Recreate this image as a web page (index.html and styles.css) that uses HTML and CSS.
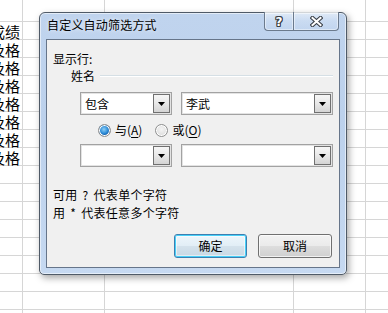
FILE: index.html
```html
<!DOCTYPE html>
<html lang="zh-CN">
<head>
<meta charset="utf-8">
<title>自定义自动筛选方式</title>
<link rel="stylesheet" href="styles.css">
</head>
<body>
<div class="sheet">
  <div class="col-a">
    <div class="cell"><span>成绩</span></div>
    <div class="cell"><span>及格</span></div>
    <div class="cell"><span>及格</span></div>
    <div class="cell"><span>及格</span></div>
    <div class="cell"><span>及格</span></div>
    <div class="cell"><span>及格</span></div>
    <div class="cell"><span>及格</span></div>
    <div class="cell"><span>及格</span></div>
  </div>

  <div class="dialog">
    <div class="titlebar">
      <span class="title">自定义自动筛选方式</span>
      <div class="caption-btns">
        <div class="cap help"><span class="help-glyph">?</span></div>
        <div class="cap close">
          <svg width="13" height="11" viewBox="0 0 13 11">
            <path d="M2.5 2 L10.5 9 M10.5 2 L2.5 9" stroke="#3a3f47" stroke-width="4.2" stroke-linecap="square" fill="none"/>
            <path d="M2.5 2 L10.5 9 M10.5 2 L2.5 9" stroke="#ffffff" stroke-width="2" stroke-linecap="square" fill="none"/>
          </svg>
        </div>
      </div>
    </div>
    <div class="client">
      <div class="show-label">显示行:</div>
      <div class="field-row">
        <span class="field-name">姓名</span>
        <span class="groove"></span>
      </div>
      <div class="combo-row first">
        <div class="combo narrow">
          <span class="val">包含</span>
          <span class="drop"><svg width="7" height="4" viewBox="0 0 7 4"><polygon points="0,0 7,0 3.5,4" fill="#000"/></svg></span>
        </div>
        <div class="combo wide">
          <span class="val">李武</span>
          <span class="drop"><svg width="7" height="4" viewBox="0 0 7 4"><polygon points="0,0 7,0 3.5,4" fill="#000"/></svg></span>
        </div>
      </div>
      <div class="radio-row">
        <label class="radio on"><span class="dot"></span><span>与(<u>A</u>)</span></label>
        <label class="radio"><span class="dot"></span><span>或(<u>O</u>)</span></label>
      </div>
      <div class="combo-row second">
        <div class="combo narrow">
          <span class="val"></span>
          <span class="drop"><svg width="7" height="4" viewBox="0 0 7 4"><polygon points="0,0 7,0 3.5,4" fill="#000"/></svg></span>
        </div>
        <div class="combo wide">
          <span class="val"></span>
          <span class="drop"><svg width="7" height="4" viewBox="0 0 7 4"><polygon points="0,0 7,0 3.5,4" fill="#000"/></svg></span>
        </div>
      </div>
      <div class="hint first-hint">可用 ? 代表单个字符</div>
      <div class="hint">用 * 代表任意多个字符</div>
      <div class="btn-row">
        <button class="btn default">确定</button>
        <button class="btn">取消</button>
      </div>
    </div>
  </div>
</div>
</body>
</html>
```

FILE: styles.css
```css
* { box-sizing: border-box; }
html, body { margin: 0; padding: 0; }
body {
  width: 388px;
  height: 313px;
  overflow: hidden;
  background: #fff;
  font-family: "Noto Sans CJK SC", "Noto Sans", sans-serif;
}

.sheet {
  position: relative;
  width: 388px;
  height: 313px;
  overflow: hidden;
  background-color: #fff;
  background-image:
    linear-gradient(#d6d6d6, #d6d6d6),
    linear-gradient(#d6d6d6, #d6d6d6),
    linear-gradient(#d6d6d6, #d6d6d6),
    linear-gradient(#d6d6d6, #d6d6d6),
    repeating-linear-gradient(to bottom, #d6d6d6 0 1px, transparent 1px 18px);
  background-size: 1px 100%, 1px 100%, 1px 100%, 1px 100%, 100% 292px;
  background-position: 22px 0, 104px 0, 293px 0, 365px 0, 0 21px;
  background-repeat: no-repeat;
}

.col-a {
  width: 22px;
  padding-top: 22px;
  display: flex;
  flex-direction: column;
}
.cell {
  height: 18px;
  display: flex;
  justify-content: flex-end;
  align-items: center;
  overflow: hidden;
  padding-right: 2px;
  font-size: 15px;
  line-height: 17px;
  white-space: nowrap;
  color: #000;
}
.cell span { display: block; height: 17px; }

/* dialog window */
.dialog {
  position: absolute;
  left: 39px;
  top: 12px;
  width: 308px;
  height: 263px;
  border: 1px solid #4f5a67;
  border-radius: 6px 6px 5px 5px;
  background: linear-gradient(to bottom, #c0d4ee 0, #bcd1ec 40%, #c6d9f1 100%);
  box-shadow: inset 0 0 0 1px rgba(255,255,255,0.55), 2px 3px 7px rgba(0,0,0,0.35);
  padding: 0 6px 6px 6px;
  display: flex;
  flex-direction: column;
}
.titlebar {
  height: 26px;
  display: flex;
  align-items: flex-start;
}
.title {
  margin-left: 1px;
  margin-top: 4px;
  font-size: 12px;
  line-height: 16px;
  color: #000;
  text-shadow: 0 0 4px rgba(255,255,255,0.9);
  letter-spacing: 0.2px;
}
.caption-btns {
  margin-left: auto;
  margin-top: -1px;
  margin-right: 1px;
  display: flex;
}
.cap {
  height: 19px;
  border: 1px solid #6b7a8d;
  border-top: none;
  background: linear-gradient(to bottom, rgba(255,255,255,0.55), rgba(225,236,250,0.3) 50%, rgba(200,218,242,0.2));
  display: flex;
  align-items: center;
  justify-content: center;
  box-shadow: inset 0 0 0 1px rgba(255,255,255,0.45);
}
.help {
  width: 29px;
  border-radius: 0 0 0 4px;
  border-right: none;
}
.close {
  width: 46px;
  border-radius: 0 0 4px 0;
}
.help-glyph {
  font-family: "DejaVu Sans", sans-serif;
  font-weight: bold;
  font-size: 12px;
  line-height: 12px;
  color: #fff;
  margin-top: 1px;
  text-shadow:
    1px 0 0 #3a3f47, -1px 0 0 #3a3f47, 0 1px 0 #3a3f47, 0 -1px 0 #3a3f47,
    1px 1px 0 #3a3f47, -1px -1px 0 #3a3f47, 1px -1px 0 #3a3f47, -1px 1px 0 #3a3f47;
}

.client {
  flex: 1;
  background: #f0f0f0;
  border: 1px solid #66758a;
  display: flex;
  flex-direction: column;
  font-size: 12px;
  line-height: 16px;
  color: #000;
}
.show-label {
  margin: 11px 0 0 6px;
}
.field-row {
  margin: 1px 6px 0 24px;
  display: flex;
  align-items: center;
}
.groove {
  flex: 1;
  height: 2px;
  margin-left: 5px;
  border-top: 1px solid #d5dfe5;
  border-bottom: 1px solid #ffffff;
}

.combo-row {
  display: flex;
  gap: 9px;
  margin-left: 33px;
}
.combo-row.first { margin-top: 8px; }
.combo-row.second { margin-top: 6px; }
.combo {
  height: 23px;
  border: 1px solid #a2a2a2;
  box-shadow: inset 0 0 0 1px #e3e3e3;
  background: #fff;
  padding: 1px;
  display: flex;
  align-items: stretch;
}
.combo.narrow { width: 92px; }
.combo.wide { width: 152px; }
.val {
  flex: 1;
  padding-left: 3px;
  display: flex;
  align-items: center;
  font-size: 12px;
}
.drop {
  width: 17px;
  border: 1px solid #707070;
  background: linear-gradient(to bottom, #f6f6f6 0, #e8e8e8 50%, #d4d4d4 100%);
  display: flex;
  align-items: center;
  justify-content: center;
}
.drop svg { display: block; margin-top: 1px; }

.radio-row {
  margin: 7px 0 0 51px;
  display: flex;
  align-items: center;
}
.radio {
  display: flex;
  align-items: center;
  gap: 4px;
  margin-right: 13px;
}
.dot {
  width: 13px;
  height: 13px;
  border-radius: 50%;
  border: 1px solid #8e8f8f;
  background: radial-gradient(circle at 50% 40%, #f4f4f4 0, #e2e2e2 60%, #cfcfcf 100%);
  box-shadow: inset 0 0 0 1px #fff;
}
.radio.on .dot {
  background:
    radial-gradient(circle at 45% 40%, #8fd0f7 0, #2b8ad6 45%, #0d4f9a 72%, transparent 74%),
    radial-gradient(circle, #f4f4f4 0, #dcdcdc 100%);
}
u { text-decoration-thickness: 1px; text-underline-offset: 2px; }

.hint {
  line-height: 18px;
  margin-left: 6px;
  word-spacing: 2px;
  letter-spacing: 0.3px;
}
.first-hint { margin-top: 19px; }

.btn-row {
  margin: 12px 7px 0 0;
  display: flex;
  justify-content: flex-end;
  gap: 11px;
}
.btn {
  height: 24px;
  width: 74px;
  font-family: "Noto Sans CJK SC", "Noto Sans", sans-serif;
  font-size: 12px;
  line-height: 16px;
  color: #000;
  border: 1px solid #707070;
  border-radius: 3px;
  background: linear-gradient(to bottom, #f2f2f2 0, #ebebeb 48%, #dddddd 52%, #cfcfcf 100%);
  box-shadow: inset 0 0 0 1px rgba(255,255,255,0.7);
  padding: 0;
}
.btn.default {
  width: 73px;
  border-color: #3c7fb1;
  box-shadow: inset 0 0 0 1px #48d0f8, inset 0 0 0 2px rgba(255,255,255,0.5);
  background: linear-gradient(to bottom, #eef6fb 0, #e2eef6 48%, #d4e2ec 52%, #c8d8e4 100%);
}
```
